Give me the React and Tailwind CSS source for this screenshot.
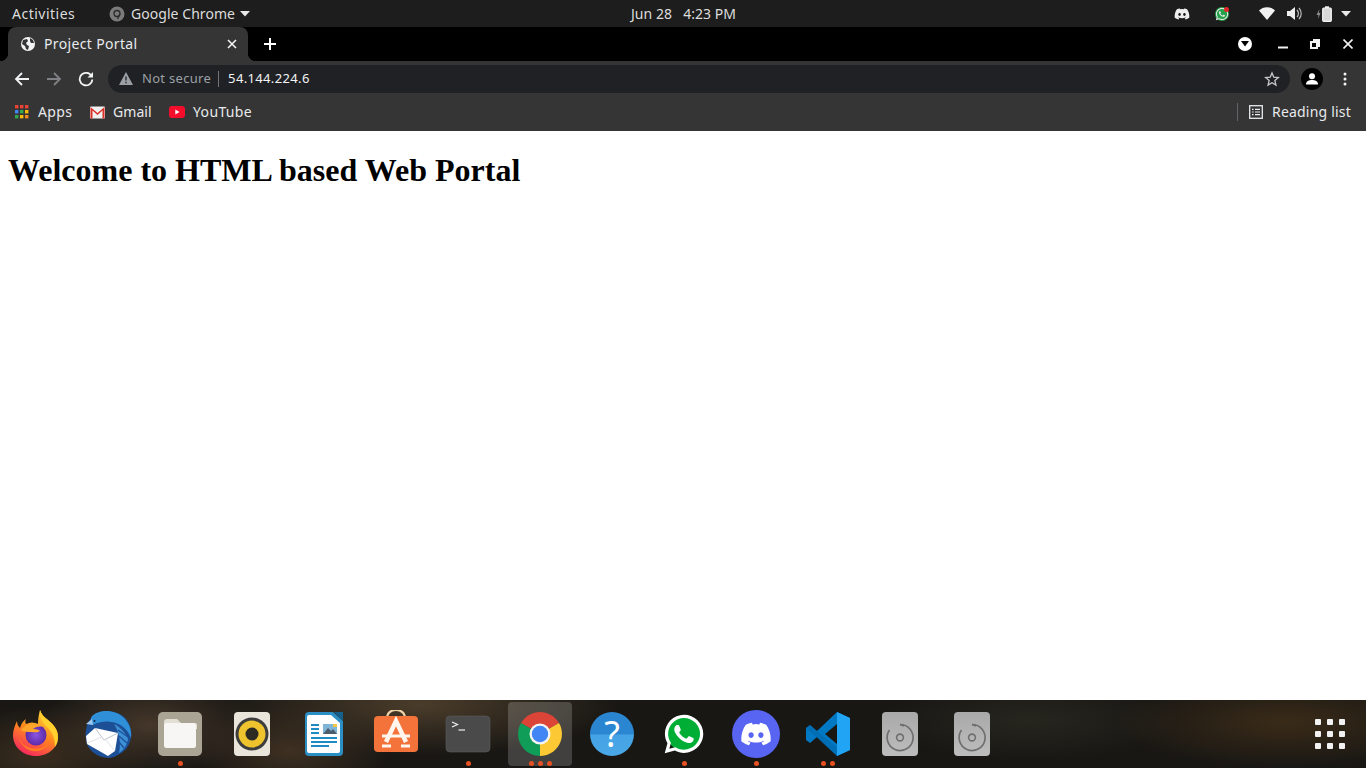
import React from "react";
import { FaDiscord, FaWhatsapp } from "react-icons/fa";

const Globe = () => (
  <svg width="16" height="16" viewBox="0 0 16 16" className="ml-[12px] shrink-0">
    <circle cx="8" cy="8" r="7" fill="#f1f3f4" />
    <path d="M3 4 L7 3 L8 5 L6 7 L7 9 L9 10 L8 14 L6 13 L5 10 L2 8 Z M10 2 L13 4 L14 7 L11 7 L10 5 Z" fill="#353535" />
  </svg>
);

function Dots({ n }) {
  return (
    <div className="absolute bottom-[2px] left-0 right-0 flex justify-center gap-[4px]">
      {Array.from({ length: n }).map((_, i) => (
        <span key={i} className="w-[5px] h-[5px] rounded-full bg-[#e9501f]" />
      ))}
    </div>
  );
}

function DockItem({ children, n = 0, active = false }) {
  return (
    <div className="relative w-[72px] h-[68px] flex justify-center pt-[10px] shrink-0">
      {active && <div className="absolute left-[4px] top-[2px] w-[64px] h-[64px] rounded-[4px] bg-[#ffffff2e]" />}
      <div className="relative w-[48px] h-[48px]">{children}</div>
      {n > 0 && <Dots n={n} />}
    </div>
  );
}

const Firefox = () => (
  <svg width="48" height="48" viewBox="0 0 48 48">
    <defs>
      <linearGradient id="ff1" x1="0.8" y1="0" x2="0.3" y2="1">
        <stop offset="0" stopColor="#ffe03a" />
        <stop offset="0.5" stopColor="#ff8a1e" />
        <stop offset="1" stopColor="#f5265f" />
      </linearGradient>
      <radialGradient id="ff2" cx="0.5" cy="0.5" r="0.5">
        <stop offset="0" stopColor="#8a55e0" />
        <stop offset="1" stopColor="#5b2aa8" />
      </radialGradient>
    </defs>
    <path d="M24 46C11 46 1 37 1 25c0-5 2-10 4-14 0 3 1 5 3 7 1-4 3-7 6-9-1 2-1 4 0 5 4-2 8-2 12 0 0-6 1-10 2-14 1 4 4 7 8 10 6 5 10 10 10 17C46 37 37 46 24 46Z" fill="url(#ff1)" />
    <path d="M28 0c1 4 4 7 8 10 6 5 10 10 10 17 0 4-1 7-3 10 0-8-2-14-7-19-5-4-8-10-8-18Z" fill="#ffd02e" />
    <circle cx="24" cy="25" r="10.5" fill="url(#ff2)" />
    <path d="M9 20c5-7 16-9 23-3-5-1-9 0-11 2 4 0 6 1 7 2-3 2-6 1-8 1-4 0-8 0-11-2Z" fill="#ffa62a" />
    <path d="M7 27c3 10 14 14 24 10 4-2 6-5 8-9-2 9-9 14-18 13-7-1-13-7-14-14Z" fill="#ff7a22" />
  </svg>
);

const Thunderbird = () => (
  <svg width="48" height="48" viewBox="0 0 48 48">
    <path d="M7 8C15 -1 33 -1 42 9c7 8 7 22 0 30-5 5-11 8-16 9-9 0-19-4-23-14C0 25 2 14 7 8Z" fill="#1c4f96" />
    <path d="M8 6C14 0 30 -2 40 8c5 5 8 12 7 20-3-8-9-13-15-15-7-2-13-2-19 0L9 15C7 12 6 9 8 6Z" fill="#2f8fd8" />
    <path d="M30 14c6 3 12 9 14 15-1 6-4 11-9 14 2-8 1-20-5-29Z" fill="#3d8fd6" />
    <path d="M34 20 L44 27 M35 26 L43 33 M35 32 L40 38" stroke="#1c4f96" strokeWidth="1.2" />
    <path d="M2 26 L11 18 L34 23 L31 41 L24 46 L3 34 Z" fill="#ffffff" />
    <path d="M11 18 L20 30 L34 23" fill="none" stroke="#b6bbc4" strokeWidth="0.9" />
    <path d="M3 33 L18 27 M31 41 L21 29" fill="none" stroke="#d6d9de" strokeWidth="0.8" />
    <path d="M8 9 L2 14 L9 15 Z" fill="#9fc9ec" />
    <circle cx="10.5" cy="11" r="1" fill="#10233f" />
  </svg>
);

const Files = () => (
  <svg width="48" height="48" viewBox="0 0 48 48">
    <rect x="2" y="2" width="44" height="44" rx="5" fill="#aaa494" />
    <path d="M8 12a3 3 0 0 1 3-3h10l4 4h14a2 2 0 0 1 2 2v4H8Z" fill="#e2dfd5" />
    <rect x="8" y="13" width="32" height="25" rx="2.5" fill="#f7f6f4" />
  </svg>
);

const Rhythmbox = () => (
  <svg width="48" height="48" viewBox="0 0 48 48">
    <rect x="6" y="2" width="36" height="44" rx="4" fill="#e9e5db" />
    <circle cx="24" cy="24" r="16.5" fill="#3d3d3d" />
    <circle cx="24" cy="24" r="13.5" fill="#eec32d" />
    <circle cx="24" cy="24" r="6.5" fill="#2d2a24" />
  </svg>
);

const Writer = () => (
  <svg width="48" height="48" viewBox="0 0 48 48">
    <path d="M9 2h24l10 9v31a4 4 0 0 1-4 4H9a4 4 0 0 1-4-4V6a4 4 0 0 1 4-4Z" fill="#2b8ec4" />
    <path d="M9 5h22l9 8v28a2 2 0 0 1-2 2H9a2 2 0 0 1-2-2V7a2 2 0 0 1 2-2Z" fill="#ffffff" />
    <path d="M34 2l9 0v9Z" fill="#14608f" />
    <rect x="23" y="14" width="14" height="10" fill="#7fb5d6" />
    <path d="M23 24l5-6 3 3 2-2 4 5Z" fill="#4c5e6b" />
    <rect x="33" y="14" width="4" height="3" fill="#f2c744" />
    <path d="M11 15h8M11 19h8M11 23h8M11 28h26M11 32h26M11 36h18" stroke="#1f8bc2" strokeWidth="2" />
  </svg>
);

const Software = () => (
  <svg width="48" height="48" viewBox="0 0 48 48">
    <path d="M15 8c0-5 4-8 9-8s9 3 9 8" fill="none" stroke="#f1d3a8" strokeWidth="2" />
    <rect x="2" y="6" width="44" height="36" rx="4" fill="#f3733b" />
    <path d="M14 32 L24 11 L34 32" fill="none" stroke="#fff6ee" strokeWidth="4.5" />
    <path d="M10 26 H38" stroke="#fff6ee" strokeWidth="3" />
    <path d="M10 36 H19 M29 36 H38" stroke="#fff6ee" strokeWidth="3" />
  </svg>
);

const Terminal = () => (
  <svg width="48" height="48" viewBox="0 0 48 48">
    <rect x="2" y="6" width="44" height="36" rx="4" fill="#4a4a4a" stroke="#5d5d5d" strokeWidth="0.6" />
    <path d="M8 12 L13.5 14.5 L8 17" fill="none" stroke="#f1f1f1" strokeWidth="1.2" />
    <path d="M14.5 20 H21" stroke="#f1f1f1" strokeWidth="1.2" />
  </svg>
);

const Chrome = () => (
  <svg width="48" height="48" viewBox="0 0 48 48">
    <path d="M24 24 L5 13 A22 22 0 0 1 43 13 Z" fill="#db4437" />
    <path d="M24 24 L43 13 A22 22 0 0 1 24 46 Z" fill="#fcc934" />
    <path d="M24 24 L24 46 A22 22 0 0 1 5 13 Z" fill="#0f9d58" />
    <circle cx="24" cy="24" r="10.5" fill="#f4f4f4" />
    <circle cx="24" cy="24" r="8.2" fill="#4285f4" />
  </svg>
);

const Help = () => (
  <div className="absolute left-[2px] top-[2px] w-[44px] h-[44px] rounded-full bg-[linear-gradient(#2b86d2_0,#2b86d2_50%,#44a3e4_52%,#4aa8e8_100%)] flex items-center justify-center text-white text-[36px] font-normal leading-none font-['Noto_Sans',sans-serif]">
    ?
  </div>
);

const WhatsApp = () => (
  <div className="absolute left-0 top-0 w-[48px] h-[48px] flex items-center justify-center">
    <div className="absolute left-[7px] top-[7px] w-[34px] h-[34px] rounded-full bg-[#00ad35]" />
    <FaWhatsapp size={44} color="#ffffff" className="relative" />
  </div>
);

const Discord = () => (
  <div className="absolute left-0 top-0 w-[48px] h-[48px] rounded-full bg-[#5865f2] flex items-center justify-center">
    <FaDiscord size={32} color="#ffffff" />
  </div>
);

const VSCode = () => (
  <svg width="48" height="48" viewBox="0 0 48 48">
    <path d="M33 2 L46 8 V40 L33 46 L13 27 L6 33 L2 30 V18 L6 15 L13 21 Z M33 14 L21 24 L33 34 Z" fill="#0078c4" />
    <path d="M33 2 L46 8 V40 L33 46 Z" fill="#20a4f3" />
    <path d="M2 18 L6 15 L33 38 V46 Z" fill="#0066a8" opacity="0.55" />
  </svg>
);

const Disc = () => (
  <svg width="48" height="48" viewBox="0 0 48 48">
    <defs>
      <linearGradient id="dg" x1="0" y1="0" x2="0" y2="1">
        <stop offset="0" stopColor="#a9a9a9" />
        <stop offset="1" stopColor="#bdbdbd" />
      </linearGradient>
    </defs>
    <rect x="6" y="2" width="36" height="44" rx="4" fill="url(#dg)" />
    <path d="M24 14.5 A13 13 0 1 1 13.5 20" fill="none" stroke="#6f6f6f" strokeWidth="1.7" />
    <path d="M24 14.5 L28 16" fill="none" stroke="#6f6f6f" strokeWidth="1.7" />
    <circle cx="24" cy="27.5" r="3.4" fill="none" stroke="#6f6f6f" strokeWidth="1.6" />
  </svg>
);

const Apps = () => (
  <svg width="14" height="14" viewBox="0 0 14 14" className="ml-[15px] shrink-0">
    {[
      ["#ea4335", "#ea4335", "#ea4335"],
      ["#4285f4", "#34a853", "#fbbc05"],
      ["#34a853", "#fbbc05", "#f28b24"],
    ].map((row, y) =>
      row.map((c, x) => <rect key={x + "-" + y} x={x * 5} y={y * 5} width="3.4" height="3.4" fill={c} />)
    )}
  </svg>
);

const Gmail = () => (
  <svg width="15" height="13" viewBox="0 0 15 13" className="ml-[17px] shrink-0">
    <rect x="0" y="0.5" width="15" height="12" rx="1" fill="#f1f1f1" />
    <path d="M0.5 12.5 V1 L7.5 7 L14.5 1 V12.5 H12.5 V4.5 L7.5 9 L2.5 4.5 V12.5 Z" fill="#d93025" />
  </svg>
);

const YouTube = () => (
  <svg width="16" height="12" viewBox="0 0 16 12" className="ml-[16px] shrink-0">
    <rect x="0" y="0" width="16" height="12" rx="3" fill="#f40e2b" />
    <path d="M6.3 3.6 L10.5 6 L6.3 8.4 Z" fill="#ffffff" />
  </svg>
);

const barText = "text-[14px] text-[#dcdcdc] whitespace-nowrap";

export default function App() {
  return (
    <div className="w-[1366px] h-[768px] overflow-hidden flex flex-col bg-white font-['Noto_Sans',sans-serif]">
      {/* GNOME top bar */}
      <div className="relative h-[27px] shrink-0 bg-[#1d1d1d] flex items-center">
        <span className={barText + " ml-[12px] w-[63px] tracking-[0.5px]"}>Activities</span>
        <svg width="16" height="16" viewBox="0 0 16 16" className="ml-[34px] shrink-0">
          <circle cx="8" cy="8" r="7.5" fill="#7b7b7b" />
          <circle cx="8" cy="7.5" r="3" fill="none" stroke="#2a2a2a" strokeWidth="1.3" />
          <path d="M11 8 L8.5 13" stroke="#2a2a2a" strokeWidth="1.2" />
        </svg>
        <span className={barText + " ml-[6px] w-[103px] tracking-[0.05px]"}>Google Chrome</span>
        <svg width="10" height="6" viewBox="0 0 10 6" className="ml-[6px]"><path d="M0 0 H10 L5 5.5 Z" fill="#e8e8e8" /></svg>
        <span className={barText + " ml-[381px] tracking-[0.05px]"}>Jun 28&nbsp;&nbsp; 4:23 PM</span>
        <div className="ml-auto flex items-center">
          <FaDiscord size={16} color="#eeeeee" />
          <div className="relative ml-[25px] w-[14px] h-[14px] rounded-full bg-[#25a24a] flex items-center justify-center">
            <FaWhatsapp size={14} color="#e8e8e8" />
            <span className="absolute right-0 top-0 w-[5px] h-[5px] rounded-full bg-[#e2262a]" />
          </div>
          <svg width="16" height="13" viewBox="0 0 16 13" className="ml-[30px]"><path d="M0 3.5 C4 -1 12 -1 16 3.5 L8 13 Z" fill="#f2f2f2" /></svg>
          <svg width="16" height="15" viewBox="0 0 16 15" className="ml-[12px]">
            <path d="M0 5 H3 L8 1 V14 L3 10 H0 Z" fill="#eeeeee" />
            <path d="M10 4 A5 5 0 0 1 10 11 M12 2 A8 8 0 0 1 12 13" fill="none" stroke="#bdbdbd" strokeWidth="1.2" />
          </svg>
          <svg width="16" height="16" viewBox="0 0 16 16" className="ml-[13px]">
            <path d="M3.5 3 L0.5 9 H2.5 L2 13 L4.5 7 H2.8 Z" fill="#8f8f8f" />
            <rect x="6.7" y="2.2" width="8.6" height="13.1" rx="1" fill="#d8d8d8" stroke="#f4f4f4" strokeWidth="1.2" />
            <rect x="9" y="0.3" width="4" height="2" fill="#f4f4f4" />
          </svg>
          <svg width="10" height="6" viewBox="0 0 10 6" className="ml-[9px] mr-[15px]"><path d="M0 0 H10 L5 5.5 Z" fill="#e8e8e8" /></svg>
        </div>
      </div>

      {/* Tab strip */}
      <div className="h-[34px] shrink-0 bg-black flex items-end">
        <div className="relative ml-[8px] w-[240px] h-[34px] bg-[#353535] rounded-t-[8px] flex items-center">
          <span className="absolute left-[-8px] bottom-0 w-[8px] h-[8px] bg-[radial-gradient(circle_at_0_0,#000_8px,#353535_8.5px)]" />
          <span className="absolute right-[-8px] bottom-0 w-[8px] h-[8px] bg-[radial-gradient(circle_at_100%_0,#000_8px,#353535_8.5px)]" />
          <Globe />
          <span className="ml-[8px] mb-[2px] text-[14px] tracking-[0.35px] text-[#e8eaed] whitespace-nowrap">Project Portal</span>
          <svg width="10" height="10" viewBox="0 0 10 10" className="ml-auto mr-[11px]"><path d="M1 1 L9 9 M9 1 L1 9" stroke="#f1f3f4" strokeWidth="1.6" /></svg>
        </div>
        <svg width="12" height="12" viewBox="0 0 12 12" className="ml-[16px] mb-[11px]"><path d="M6 0 V12 M0 6 H12" stroke="#ffffff" strokeWidth="2" /></svg>
        <div className="ml-auto h-[34px] flex items-center">
          <div className="w-[14px] h-[14px] rounded-full bg-white flex items-center justify-center">
            <svg width="8" height="6" viewBox="0 0 8 6"><path d="M0 0 H8 L4 5.5 Z" fill="#000" /></svg>
          </div>
          <svg width="10" height="10" viewBox="0 0 10 10" className="ml-[26px]"><path d="M0 8.5 H10" stroke="#f1f1f1" strokeWidth="2" /></svg>
          <svg width="10" height="10" viewBox="0 0 10 10" className="ml-[22px]">
            <path d="M3 1 H9 V7 H7 M1 3 H7 V9 H1 Z" fill="none" stroke="#f1f1f1" strokeWidth="2" />
          </svg>
          <svg width="10" height="10" viewBox="0 0 10 10" className="ml-[23px] mr-[13px]"><path d="M0.5 0.5 L9.5 9.5 M9.5 0.5 L0.5 9.5" stroke="#f1f1f1" strokeWidth="1.6" /></svg>
        </div>
      </div>

      {/* Toolbar */}
      <div className="h-[35px] shrink-0 bg-[#353535] flex items-center">
        <svg width="16" height="16" viewBox="0 0 16 16" className="ml-[14px]"><path d="M15 8 H2 M8 2 L2 8 L8 14" fill="none" stroke="#f1f3f4" strokeWidth="1.8" /></svg>
        <svg width="16" height="16" viewBox="0 0 16 16" className="ml-[16px]"><path d="M1 8 H14 M8 2 L14 8 L8 14" fill="none" stroke="#7f8184" strokeWidth="1.8" /></svg>
        <svg width="16" height="16" viewBox="0 0 16 16" className="ml-[16px]">
          <path d="M13.5 5 A6.3 6.3 0 1 0 14.3 8.5" fill="none" stroke="#f1f3f4" strokeWidth="1.8" />
          <path d="M15 1 V6.5 H9.5 Z" fill="#f1f3f4" />
        </svg>
        <div className="ml-[14px] w-[1182px] h-[28px] rounded-full bg-[#202124] flex items-center">
          <svg width="14" height="13" viewBox="0 0 14 13" className="ml-[11px]">
            <path d="M7 0 L14 13 H0 Z" fill="#9aa0a6" />
            <path d="M7 4.5 V8.5 M7 9.7 V11.2" stroke="#202124" strokeWidth="1.3" />
          </svg>
          <span className="ml-[9px] text-[13px] text-[#9aa0a6] whitespace-nowrap tracking-[0.3px]">Not secure</span>
          <span className="ml-[7px] w-px h-[16px] bg-[#70757a]" />
          <span className="ml-[9px] text-[13px] text-[#f1f3f4] whitespace-nowrap tracking-[0.35px]">54.144.224.6</span>
          <svg width="16" height="16" viewBox="0 0 24 24" className="ml-auto mr-[10px]">
            <path d="M12 3 L14.7 9.3 L21.5 9.9 L16.3 14.4 L17.9 21 L12 17.5 L6.1 21 L7.7 14.4 L2.5 9.9 L9.3 9.3 Z" fill="none" stroke="#c4c7c9" strokeWidth="2" />
          </svg>
        </div>
        <div className="ml-[11px] w-[22px] h-[22px] rounded-full bg-black flex items-center justify-center overflow-hidden">
          <svg width="14" height="14" viewBox="0 0 14 14">
            <circle cx="7" cy="4.2" r="3" fill="#fff" />
            <path d="M1 12.5 C1 9 4 8 7 8 S13 9 13 12.5 Z" fill="#fff" />
          </svg>
        </div>
        <svg width="4" height="14" viewBox="0 0 4 14" className="ml-[20px]">
          <circle cx="2" cy="2" r="1.5" fill="#f1f3f4" />
          <circle cx="2" cy="7" r="1.5" fill="#f1f3f4" />
          <circle cx="2" cy="12" r="1.5" fill="#f1f3f4" />
        </svg>
      </div>

      {/* Bookmarks */}
      <div className="h-[35px] pb-[3px] shrink-0 bg-[#353535] flex items-center text-[14px] text-[#e8eaed]">
        <Apps />
        <span className="ml-[9px] mb-[2px] w-[35px] tracking-[0.4px]">Apps</span>
        <Gmail />
        <span className="ml-[8px] mb-[2px] w-[40px] tracking-[0.05px]">Gmail</span>
        <YouTube />
        <span className="ml-[8px] mb-[2px] w-[60px] tracking-[0.35px]">YouTube</span>
        <span className="ml-auto w-px h-[18px] bg-[#5f6368]" />
        <svg width="14" height="14" viewBox="0 0 14 14" className="ml-[11px]">
          <rect x="0.7" y="0.7" width="12.6" height="12.6" fill="none" stroke="#e8eaed" strokeWidth="1.3" />
          <path d="M3 4.3 H4.6 M6 4.3 H11 M3 7 H4.6 M6 7 H11 M3 9.7 H4.6 M6 9.7 H11" stroke="#e8eaed" strokeWidth="1.2" />
        </svg>
        <span className="ml-[9px] mr-[15px] mb-[2px] w-[79px] whitespace-nowrap tracking-[0.2px]">Reading list</span>
      </div>

      {/* Page */}
      <div className="flex-1 min-h-0 bg-white px-[8px]">
        <h1 className="mt-[21px] text-[32px] font-bold leading-[37px] text-black whitespace-nowrap font-['Liberation_Serif',serif]">
          Welcome to HTML based Web Portal
        </h1>
      </div>

      {/* Dock */}
      <div className="h-[68px] shrink-0 flex bg-[#191714] bg-[radial-gradient(ellipse_110px_50px_at_150px_25px,#45372a_0%,#45372a00_100%),radial-gradient(ellipse_100px_45px_at_290px_50px,#3f3122_0%,#3f312200_100%),radial-gradient(ellipse_200px_50px_at_420px_5px,#4a3c2a_0%,#4a3c2a00_100%),radial-gradient(ellipse_110px_50px_at_40px_55px,#3a2d1e_0%,#3a2d1e00_100%),radial-gradient(ellipse_170px_45px_at_1285px_22px,#3a2b18_0%,#3a2b1800_100%),radial-gradient(ellipse_150px_40px_at_1030px_20px,#26261f_0%,#26261f00_100%)]">
        <DockItem><Firefox /></DockItem>
        <DockItem><Thunderbird /></DockItem>
        <DockItem n={1}><Files /></DockItem>
        <DockItem><Rhythmbox /></DockItem>
        <DockItem><Writer /></DockItem>
        <DockItem><Software /></DockItem>
        <DockItem n={1}><Terminal /></DockItem>
        <DockItem n={3} active><Chrome /></DockItem>
        <DockItem><Help /></DockItem>
        <DockItem n={1}><WhatsApp /></DockItem>
        <DockItem n={1}><Discord /></DockItem>
        <DockItem n={2}><VSCode /></DockItem>
        <DockItem><Disc /></DockItem>
        <DockItem><Disc /></DockItem>
        <div className="ml-auto mr-[21px] mt-[19px] grid grid-cols-3 gap-[6px] w-[30px] h-[30px]">
          {Array.from({ length: 9 }).map((_, i) => (
            <span key={i} className="w-[6px] h-[6px] rounded-[1px] bg-[#f2f2f2]" />
          ))}
        </div>
      </div>
    </div>
  );
}
